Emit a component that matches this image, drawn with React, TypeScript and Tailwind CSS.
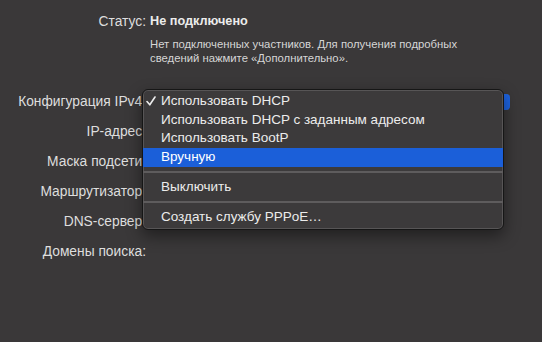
import React from "react";

const labels = ["IP-адрес:", "Маска подсети:", "Маршрутизатор:", "DNS-сервер:", "Домены поиска:"];

export default function App() {
  return (
    <div className="relative w-[542px] h-[342px] overflow-hidden bg-[#3a3839] font-['Liberation_Sans',Arial,sans-serif] text-[13.8px] text-[#dedede]">
      <div className="grid grid-cols-[146px_1fr] gap-x-[4px] pt-[13px]">
        <div className="h-[18px] flex items-center justify-end">Статус:</div>
        <div className="h-[18px] flex items-center font-bold text-[12.7px] text-[#ececec]">Не подключено</div>

        <div />
        <div className="mt-[7px] mb-[22px] text-[11.3px] leading-[13.5px] text-[#d6d6d6] w-[330px]">
          Нет подключенных участников. Для получения подробных сведений нажмите «Дополнительно».
        </div>

        <div className="h-[30px] flex items-center justify-end whitespace-nowrap">Конфигурация IPv4:</div>
        <div className="h-[30px] flex items-center">
          <div className="w-[360px] h-[16px] rounded-[4px] bg-[#5b595a] flex justify-end">
            <div className="w-[16px] h-full rounded-r-[4px] bg-[#1d63df]" />
          </div>
        </div>

        {labels.map((l) => (
          <React.Fragment key={l}>
            <div className="h-[30px] flex items-center justify-end whitespace-nowrap">{l}</div>
            <div className="h-[30px]" />
          </React.Fragment>
        ))}
      </div>

      <div className="absolute left-[142px] top-[89px] w-[362px] h-[141px] rounded-[6px] border border-[#161616] bg-[#3c3a3b] shadow-[0_6px_16px_rgba(0,0,0,0.45),inset_0_0_0_1px_#575556] pt-[2px] text-[13.5px] text-[#ececec]">
        <div className="h-[18.5px] flex items-center">
          <span className="w-[18px] flex items-center pl-[3px]">
            <svg width="10" height="10" viewBox="0 0 10 10" fill="none">
              <path d="M1 5.5 L3.8 8.8 L9 1" stroke="#ececec" strokeWidth="1.6" strokeLinecap="round" strokeLinejoin="round" />
            </svg>
          </span>
          <span>Использовать DHCP</span>
        </div>
        <div className="h-[18.5px] flex items-center pl-[18px]">Использовать DHCP с заданным адресом</div>
        <div className="h-[18.5px] flex items-center pl-[18px]">Использовать BootP</div>
        <div className="h-[19px] flex items-center pl-[18px] bg-[#1b5fd9] text-white">Вручную</div>
        <div className="h-[11px] flex items-center"><div className="w-full h-[1.5px] bg-[#5e5c5d]" /></div>
        <div className="h-[19px] flex items-center pl-[18px]">Выключить</div>
        <div className="h-[11px] flex items-center"><div className="w-full h-[1.5px] bg-[#5e5c5d]" /></div>
        <div className="h-[19px] flex items-center pl-[18px]">Создать службу PPPoE…</div>
      </div>
    </div>
  );
}
